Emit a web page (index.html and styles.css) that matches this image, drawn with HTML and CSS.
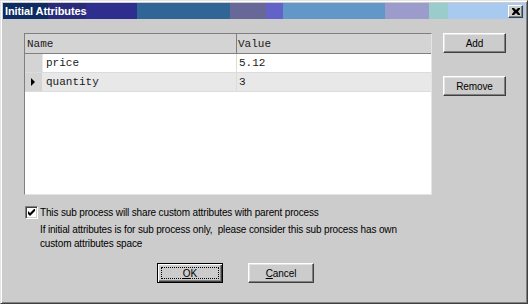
FILE: index.html
```html
<!DOCTYPE html>
<html lang="en">
<head>
  <meta charset="UTF-8">
  <title>Initial Attributes</title>
  <link rel="stylesheet" href="styles.css">
</head>
<body>
  <div class="window">
    <div class="titlebar">
      <span class="title">Initial Attributes</span>
      <div class="close-btn">
        <svg viewBox="0 0 8 7" width="8" height="7">
          <path d="M0 0h2l2 2 2-2h2v1l-2 2.5 2 2.5v1h-2l-2-2-2 2h-2v-1l2-2.5-2-2.5z" fill="#000"/>
        </svg>
      </div>
    </div>

    <div class="content">
      <div class="main-row">
        <div class="grid">
          <div class="grid-row header">
            <div class="cell name-col">Name</div>
            <div class="cell value-col">Value</div>
          </div>
          <div class="grid-row">
            <div class="row-head"></div>
            <div class="cell name">price</div>
            <div class="cell value">5.12</div>
          </div>
          <div class="grid-row current">
            <div class="row-head"><span class="arrow"></span></div>
            <div class="cell name">quantity</div>
            <div class="cell value">3</div>
          </div>
        </div>

        <div class="side-buttons">
          <button class="btn">Add</button>
          <button class="btn">Remove</button>
        </div>
      </div>

      <div class="check-row">
        <span class="checkbox">
          <svg viewBox="0 0 7 7" width="7" height="7">
            <path d="M0 2v3l2 2 5-5v-3l-5 5z" fill="#000"/>
          </svg>
        </span>
        <span>This sub process will share custom attributes with parent process</span>
      </div>

      <p class="note">If initial attributes is for sub process only,&nbsp; please consider this sub process has own custom attributes space</p>

      <div class="footer">
        <button class="btn default"><span class="focus"><u>O</u>K</span></button>
        <button class="btn"><u>C</u>ancel</button>
      </div>
    </div>
  </div>
</body>
</html>
```

FILE: styles.css
```css
* {
  margin: 0;
  padding: 0;
  box-sizing: border-box;
}

body {
  background-color: #cccccc;
  font-family: 'Liberation Sans', Arial, sans-serif;
  font-size: 10px;
  letter-spacing: -0.15px;
  color: #000;
}

.window {
  width: 528px;
  height: 304px;
  background-color: #cccccc;
  border: 1px solid;
  border-color: #e4e4e4 #404040 #404040 #e4e4e4;
  box-shadow: inset 1px 1px #ffffff, inset -1px -1px #808080;
  padding: 2px;
  display: flex;
  flex-direction: column;
}

.titlebar {
  height: 16px;
  display: flex;
  align-items: center;
  justify-content: space-between;
  padding: 0 2px 0 2px;
  background: linear-gradient(to right,
    #0c2c62 0px, #0c2c62 45px,
    #2a2a7a 45px, #2a2a7a 83px,
    #2e2e8e 83px, #2e2e8e 134px,
    #306696 134px, #306696 227px,
    #686898 227px, #686898 263px,
    #6262c8 263px, #6262c8 280px,
    #6298c8 280px, #6298c8 382px,
    #9c9ccc 382px, #9c9ccc 426px,
    #9acccc 426px, #9acccc 445px,
    #a8caee 445px);
}

.title {
  color: #ffffff;
  font-weight: bold;
  font-size: 11px;
  letter-spacing: -0.1px;
}

.close-btn {
  width: 15px;
  height: 13px;
  background-color: #cccccc;
  border: 1px solid;
  border-color: #ffffff #404040 #404040 #ffffff;
  box-shadow: inset -1px -1px #808080;
  display: flex;
  align-items: center;
  justify-content: center;
}

.content {
  padding: 14px 0 0 21px;
  display: flex;
  flex-direction: column;
}

.main-row {
  display: flex;
  gap: 11px;
}

.grid {
  width: 408px;
  height: 162px;
  background-color: #ffffff;
  border: 1px solid;
  border-color: #808080 #e4e4e4 #e4e4e4 #808080;
  font-family: 'Liberation Mono', 'Courier New', monospace;
  font-size: 11px;
  letter-spacing: 0;
  color: #1a1a1a;
}

.grid-row {
  display: flex;
  height: 19px;
  border-bottom: 1px solid #dcdcdc;
}

.grid-row.header {
  height: 20px;
  background-color: #d4d4d4;
  border-bottom: 1px solid #808080;
}

.grid-row.current {
  background-color: #e8e8e8;
}

.cell {
  display: flex;
  align-items: center;
  padding-left: 2px;
}

.header .name-col {
  width: 212px;
  border-right: 1px solid #808080;
}

.header .value-col {
  flex: 1;
  padding-left: 1px;
}

.row-head {
  width: 18px;
  background-color: #d4d4d4;
  border-right: 1px solid #e8e8e8;
  display: flex;
  align-items: center;
  padding-left: 6px;
}

.arrow {
  width: 0;
  height: 0;
  border-top: 4px solid transparent;
  border-bottom: 4px solid transparent;
  border-left: 4px solid #000;
}

.name {
  width: 194px;
  padding-left: 3px;
  border-right: 1px solid #dcdcdc;
}

.value {
  flex: 1;
  padding-left: 2px;
}

.side-buttons {
  display: flex;
  flex-direction: column;
  gap: 23px;
}

.btn {
  width: 63px;
  height: 20px;
  background-color: #cccccc;
  border: 1px solid;
  border-color: #ffffff #404040 #404040 #ffffff;
  box-shadow: inset -1px -1px #808080, inset 1px 1px #e4e4e4;
  font-family: 'Liberation Sans', Arial, sans-serif;
  font-size: 10px;
  letter-spacing: -0.1px;
  color: #000;
  display: flex;
  align-items: center;
  justify-content: center;
}

.check-row {
  display: flex;
  align-items: center;
  gap: 2px;
  margin-top: 11px;
  padding-left: 1px;
}

.checkbox {
  width: 13px;
  height: 13px;
  background-color: #ffffff;
  border: 1px solid;
  border-color: #808080 #ffffff #ffffff #808080;
  box-shadow: inset 1px 1px #404040, inset -1px -1px #cccccc;
  display: flex;
  align-items: center;
  justify-content: center;
}

.note {
  width: 365px;
  margin: 4px 0 0 16px;
  line-height: 14px;
}

.footer {
  display: flex;
  gap: 25px;
  margin-top: 12px;
  padding-left: 133px;
}

.footer .btn {
  width: 66px;
}

.btn.default {
  border: 1px solid #000;
  box-shadow: inset 1px 1px #ffffff, inset -1px -1px #404040, inset -2px -2px #808080;
  padding: 3px;
}

.focus {
  width: 100%;
  height: 100%;
  border: 1px dotted #000;
  display: flex;
  align-items: center;
  justify-content: center;
}
```
